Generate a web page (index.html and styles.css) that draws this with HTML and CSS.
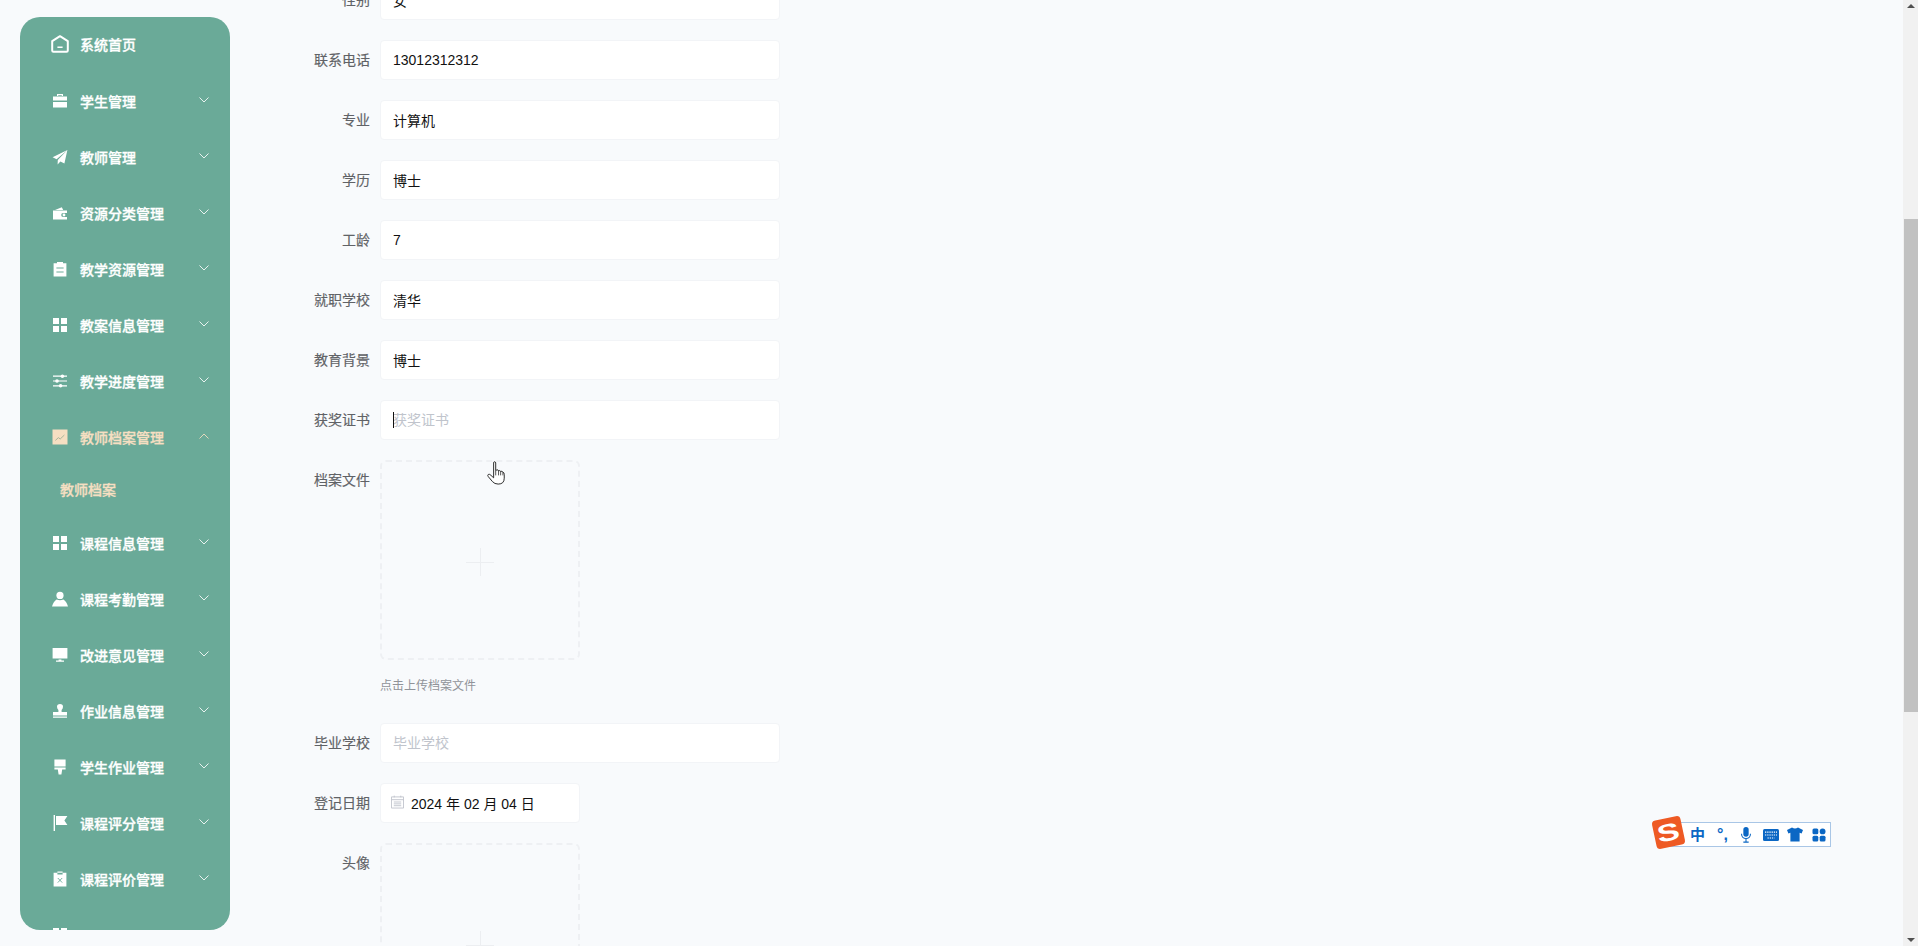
FILE: index.html
```html
<!DOCTYPE html>
<html lang="zh-CN">
<head>
  <meta charset="UTF-8" />
  <meta name="viewport" content="width=device-width, initial-scale=1.0" />
  <title>教师档案</title>
  <link rel="stylesheet" href="styles.css">
</head>
<body>
  <!-- icon sprite -->
  <svg class="sprite" xmlns="http://www.w3.org/2000/svg">
    <symbol id="i-home" viewBox="0 0 18 18">
      <path d="M9 1.2 16.8 6.2V15.6Q16.800 16.800 15.6 16.800H2.4Q1.2 16.800 1.2 15.6V6.2Z" fill="none" stroke="currentColor" stroke-width="2" stroke-linejoin="round"/>
      <path d="M6.4 12.2H11.6" stroke="currentColor" stroke-width="1.6"/>
    </symbol>
    <symbol id="i-case" viewBox="0 0 16 16">
      <path d="M5 3V1H11V3H9.8V2.2H6.2V3Z" fill="currentColor"/>
      <path d="M1 3.4H15V7.6H1ZM1 9H15V14.6H1Z" fill="currentColor"/>
    </symbol>
    <symbol id="i-plane" viewBox="0 0 16 16">
      <path d="M15.4 1 .6 8.2 4.6 10.2ZM15.4 1 5.8 11 5.6 15.4 8.4 12.6 12.4 14.6Z" fill="currentColor"/>
    </symbol>
    <symbol id="i-wallet" viewBox="0 0 16 16">
      <path d="M3 5 9.8 2.2 11.2 5Z" fill="currentColor"/>
      <path d="M1 5.6H15V8H11.2Q9.2 8 9.2 10T11.2 12H15V14.6H1Z" fill="currentColor"/>
      <circle cx="12" cy="10" r="1.4" fill="currentColor"/>
    </symbol>
    <symbol id="i-order" viewBox="0 0 16 16">
      <path d="M5 1H11V2.2H14.4V15.4H1.6V2.2H5ZM4.4 6.4V7.6H11.6V6.4ZM4.4 10.4V11.6H11.6V10.4Z" fill="currentColor" fill-rule="evenodd"/>
    </symbol>
    <symbol id="i-grid" viewBox="0 0 16 16">
      <path d="M1 1H7V7H1ZM9 1H15V7H9ZM1 9H7V15H1ZM9 9H15V15H9Z" fill="currentColor"/>
    </symbol>
    <symbol id="i-sliders" viewBox="0 0 16 16">
      <path d="M1 2.6H15V3.8H1ZM1 7.4H15V8.6H1ZM1 12.2H15V13.4H1Z" fill="currentColor"/>
      <circle cx="10.4" cy="3.2" r="1.8" fill="currentColor"/>
      <circle cx="5" cy="8" r="1.8" fill="currentColor"/>
      <circle cx="8.6" cy="12.8" r="1.8" fill="currentColor"/>
    </symbol>
    <symbol id="i-chart" viewBox="0 0 16 16">
      <path d="M.5 .5H15.5V15.5H.5Z" fill="currentColor"/>
      <path d="M3.4 11.4 6.4 8.6 8.2 10 12.4 6" fill="none" stroke="#a9b69b" stroke-width="1"/>
    </symbol>
    <symbol id="i-user" viewBox="0 0 16 16">
      <circle cx="8" cy="4.4" r="3.6" fill="currentColor"/>
      <path d="M4.6 8.4Q8 10 11.4 8.4 14.6 10.4 16 15.6H0Q1.4 10.4 4.6 8.4Z" fill="currentColor"/>
    </symbol>
    <symbol id="i-monitor" viewBox="0 0 16 16">
      <path d="M.6 1H15.4V11.6H.6ZM6.6 12.4H9.4V13.6H12V14.8H4V13.6H6.6Z" fill="currentColor"/>
    </symbol>
    <symbol id="i-stamp" viewBox="0 0 16 16">
      <path d="M8 1Q11 1 11 3.8 11 5.6 9.6 7V9H15V12.4H1V9H6.4V7Q5 5.6 5 3.8 5 1 8 1ZM1 13.6H15V14.8H1Z" fill="currentColor"/>
    </symbol>
    <symbol id="i-brush" viewBox="0 0 16 16">
      <path d="M2.4 .6H13.6V7.4H2.4ZM2.4 8.6H13.6V10.4H10.2L9.4 15.4H6.6L5.8 10.4H2.4Z" fill="currentColor"/>
    </symbol>
    <symbol id="i-flag" viewBox="0 0 16 16">
      <path d="M1.6 0H3V16H1.6ZM4 1H15.4L12.4 5.4 15.4 10H4Z" fill="currentColor"/>
    </symbol>
    <symbol id="i-release" viewBox="0 0 16 16">
      <path d="M5.4 .6H10.6V1.8H14.4V15.4H1.6V1.8H5.4V3.6H10.6V1.8H5.4Z" fill="currentColor" fill-rule="evenodd"/>
      <path d="M5.8 7 10.2 11.6M10.2 7 5.8 11.6" stroke="#6aaa98" stroke-width=".9"/>
    </symbol>
  </svg>

  <nav class="sidebar">
    <a class="menu-item home-item"><svg class="menu-icon home-icon"><use href="#i-home"/></svg><span>系统首页</span></a>
    <a class="menu-item"><svg class="menu-icon"><use href="#i-case"/></svg><span>学生管理</span><svg class="chevron" viewBox="0 0 10 6"><path d="M.5 .5 5 5 9.5 .5"/></svg></a>
    <a class="menu-item"><svg class="menu-icon"><use href="#i-plane"/></svg><span>教师管理</span><svg class="chevron" viewBox="0 0 10 6"><path d="M.5 .5 5 5 9.5 .5"/></svg></a>
    <a class="menu-item"><svg class="menu-icon"><use href="#i-wallet"/></svg><span>资源分类管理</span><svg class="chevron" viewBox="0 0 10 6"><path d="M.5 .5 5 5 9.5 .5"/></svg></a>
    <a class="menu-item"><svg class="menu-icon"><use href="#i-order"/></svg><span>教学资源管理</span><svg class="chevron" viewBox="0 0 10 6"><path d="M.5 .5 5 5 9.5 .5"/></svg></a>
    <a class="menu-item"><svg class="menu-icon"><use href="#i-grid"/></svg><span>教案信息管理</span><svg class="chevron" viewBox="0 0 10 6"><path d="M.5 .5 5 5 9.5 .5"/></svg></a>
    <a class="menu-item"><svg class="menu-icon"><use href="#i-sliders"/></svg><span>教学进度管理</span><svg class="chevron" viewBox="0 0 10 6"><path d="M.5 .5 5 5 9.5 .5"/></svg></a>
    <a class="menu-item active"><svg class="menu-icon"><use href="#i-chart"/></svg><span>教师档案管理</span><svg class="chevron" viewBox="0 0 10 6"><path d="M.5 5.5 5 1 9.5 5.5"/></svg></a>
    <a class="sub-item">教师档案</a>
    <a class="menu-item"><svg class="menu-icon"><use href="#i-grid"/></svg><span>课程信息管理</span><svg class="chevron" viewBox="0 0 10 6"><path d="M.5 .5 5 5 9.5 .5"/></svg></a>
    <a class="menu-item"><svg class="menu-icon"><use href="#i-user"/></svg><span>课程考勤管理</span><svg class="chevron" viewBox="0 0 10 6"><path d="M.5 .5 5 5 9.5 .5"/></svg></a>
    <a class="menu-item"><svg class="menu-icon"><use href="#i-monitor"/></svg><span>改进意见管理</span><svg class="chevron" viewBox="0 0 10 6"><path d="M.5 .5 5 5 9.5 .5"/></svg></a>
    <a class="menu-item"><svg class="menu-icon"><use href="#i-stamp"/></svg><span>作业信息管理</span><svg class="chevron" viewBox="0 0 10 6"><path d="M.5 .5 5 5 9.5 .5"/></svg></a>
    <a class="menu-item"><svg class="menu-icon"><use href="#i-brush"/></svg><span>学生作业管理</span><svg class="chevron" viewBox="0 0 10 6"><path d="M.5 .5 5 5 9.5 .5"/></svg></a>
    <a class="menu-item"><svg class="menu-icon"><use href="#i-flag"/></svg><span>课程评分管理</span><svg class="chevron" viewBox="0 0 10 6"><path d="M.5 .5 5 5 9.5 .5"/></svg></a>
    <a class="menu-item"><svg class="menu-icon"><use href="#i-release"/></svg><span>课程评价管理</span><svg class="chevron" viewBox="0 0 10 6"><path d="M.5 .5 5 5 9.5 .5"/></svg></a>
    <a class="menu-item"><svg class="menu-icon"><use href="#i-grid"/></svg></a>
  </nav>

  <main class="content">
    <form class="edit-form">
      <div class="form-row">
        <label>性别</label>
        <input type="text" value="女" />
      </div>
      <div class="form-row">
        <label>联系电话</label>
        <input type="text" value="13012312312" />
      </div>
      <div class="form-row">
        <label>专业</label>
        <input type="text" value="计算机" />
      </div>
      <div class="form-row">
        <label>学历</label>
        <input type="text" value="博士" />
      </div>
      <div class="form-row">
        <label>工龄</label>
        <input type="text" value="7" />
      </div>
      <div class="form-row">
        <label>就职学校</label>
        <input type="text" value="清华" />
      </div>
      <div class="form-row">
        <label>教育背景</label>
        <input type="text" value="博士" />
      </div>
      <div class="form-row">
        <label>获奖证书</label>
        <div class="input-wrap">
          <input type="text" placeholder="获奖证书" />
          <i class="caret"></i>
        </div>
      </div>
      <div class="form-row upload-row">
        <label>档案文件</label>
        <div>
          <div class="upload-box"><span class="plus"></span></div>
          <div class="upload-tip">点击上传档案文件</div>
        </div>
      </div>
      <div class="form-row">
        <label>毕业学校</label>
        <input type="text" placeholder="毕业学校" />
      </div>
      <div class="form-row">
        <label>登记日期</label>
        <div class="date-input">
          <svg class="date-icon" viewBox="0 0 14 14"><path d="M.5 1.500H13.500V13.500H.5ZM.5 4.500H13.500M3 7H11M3 9H11M3 11H11M3.500 .2V2M10.500 .2V2" fill="none" stroke="#c0c4cc"/></svg>
          <span>2024 年 02 月 04 日</span>
        </div>
      </div>
      <div class="form-row upload-row">
        <label>头像</label>
        <div class="upload-box"><span class="plus"></span></div>
      </div>
    </form>
  </main>

  <div class="scrollbar">
    <span class="arrow arrow-up"></span>
    <div class="thumb"></div>
    <span class="arrow arrow-down"></span>
  </div>

  <!-- mouse pointer -->
  <svg class="hand" viewBox="0 0 19 25">
    <path d="M7 1.800Q7 .6 8 .6T9.200 1.800V10L10.400 9.200Q11.800 8.800 12.200 10.200 13.600 9.400 14.400 10.800 16 10.200 16.800 11.600 18.200 12 18.200 14V18Q18.200 24.200 11.800 24.200 8 24.200 5.800 21.600L1.400 16.400Q.2 14.800 1.400 14 2.800 13.400 4.200 15L7 17.600Z" fill="#fff" stroke="#222" stroke-width="1" stroke-linejoin="round"/>
    <path d="M12.200 10.200V15M14.400 10.800V15M16.800 11.600V15M9.200 10V15" fill="none" stroke="#222" stroke-width=".8"/>
  </svg>

  <!-- sogou input bar -->
  <div class="ime-bar">
    <span class="ime-logo"><b>S</b></span>
    <span class="ime-zh">中</span>
    <span class="ime-punc">°,</span>
    <svg class="ime-mic" viewBox="0 0 12 18"><path d="M3 3a3 3 0 0 1 6 0V8a3 3 0 0 1-6 0Z" fill="currentColor"/><path d="M1 7.500V8a5 5 0 0 0 10 0V7.500M6 13V17M3 17H9" fill="none" stroke="currentColor" stroke-width="1.200"/></svg>
    <svg class="ime-keys" viewBox="0 0 16 12"><rect width="16" height="12" rx="1.500" fill="currentColor"/><path d="M2 3.200H14M2 6H14M4.500 9H11.500" stroke="#fff" stroke-width="1.200" stroke-dasharray="1.300 .9"/></svg>
    <svg class="ime-shirt" viewBox="0 0 16 15"><path d="M5 .5Q8 2.500 11 .5L16 3 14.600 6.500 12.600 5.800V14.500H3.400V5.800L1.400 6.500 0 3Z" fill="currentColor"/></svg>
    <svg class="ime-apps" viewBox="0 0 14 14"><rect x=".5" y=".5" width="5.800" height="5.800" rx="1.500" fill="currentColor"/><circle cx="10.600" cy="3.400" r="2.900" fill="currentColor"/><rect x=".5" y="7.700" width="5.800" height="5.800" rx="1.500" fill="currentColor"/><rect x="7.700" y="7.700" width="5.800" height="5.800" rx="1.500" fill="currentColor"/></svg>
  </div>
</body>
</html>
```

FILE: styles.css
```css
* {
  box-sizing: border-box;
}

html, body {
  height: 100%;
}

body {
  margin: 0;
  display: flex;
  overflow: hidden;
  background-color: #f8fafc;
  color: #606266;
  font-family: "Liberation Sans", "Noto Sans CJK SC", sans-serif;
  font-size: 14px;
}

.sprite {
  display: none;
}

/* sidebar */
.sidebar {
  flex: none;
  width: 210px;
  height: 913px;
  margin: 17px 0 0 20px;
  border-radius: 20px;
  background-color: #6aaa98;
  overflow: hidden;
  color: #fff;
}

.menu-item {
  display: flex;
  align-items: center;
  height: 56px;
  padding: 0 21px 0 32px;
  font-weight: 500;
  -webkit-text-stroke: 0.3px currentColor;
}

.home-item {
  height: 54px;
  margin-bottom: 2px;
}

.menu-icon {
  flex: none;
  width: 16px;
  height: 16px;
  margin-right: 12px;
  color: inherit;
}

.home-icon {
  width: 18px;
  height: 18px;
  margin: 0 11px 0 -1px;
}

.chevron {
  width: 10px;
  height: 6px;
  margin: -3px 0 0 auto;
  fill: none;
  stroke: currentColor;
  stroke-width: 1;
  opacity: 0.85;
}

.menu-item.active,
.sub-item {
  color: #f6dfc2;
}

.sub-item {
  display: flex;
  align-items: center;
  height: 48px;
  margin-bottom: 2px;
  padding-left: 40px;
  font-weight: 500;
  -webkit-text-stroke: 0.3px currentColor;
}

/* form */
.content {
  flex: 1;
  min-width: 0;
}

.edit-form {
  margin-top: -20px;
}

.form-row {
  display: flex;
  margin-bottom: 20px;
}

.form-row label {
  flex: none;
  width: 140px;
  margin-right: 10px;
  line-height: 40px;
  text-align: right;
  color: #606266;
  -webkit-text-stroke: 0.15px currentColor;
}

.form-row input,
.date-input {
  height: 40px;
  border: 1px solid #f2f4f7;
  border-radius: 4px;
  background-color: #fff;
  font-family: inherit;
  font-size: 14px;
  color: #111;
}

.form-row input {
  width: 400px;
  padding: 0 12px;
  outline: none;
}

.form-row input::placeholder {
  color: #c0c4cc;
  opacity: 1;
}

.input-wrap {
  position: relative;
}

.caret {
  position: absolute;
  left: 13px;
  top: 12px;
  width: 1px;
  height: 16px;
  background-color: #111;
}

.upload-box {
  display: flex;
  justify-content: center;
  width: 200px;
  height: 200px;
  padding-top: 86px;
  border: 2px dashed #eef0f3;
  border-radius: 6px;
}

.plus {
  position: relative;
  display: block;
  width: 28px;
  height: 28px;
  background:
    linear-gradient(#eceef1, #eceef1) center / 28px 1px no-repeat,
    linear-gradient(#eceef1, #eceef1) center / 1px 28px no-repeat;
}

.upload-tip {
  height: 43px;
  padding-top: 9px;
  line-height: 34px;
  font-size: 12px;
  color: #909399;
}

.date-input {
  display: flex;
  align-items: center;
  width: 200px;
  padding-left: 10px;
}

.date-icon {
  width: 13px;
  height: 14px;
  margin: -3px 7px 0 0;
}

/* scrollbar */
.scrollbar {
  flex: none;
  display: flex;
  flex-direction: column;
  width: 15px;
  height: 100%;
  padding-left: 1px;
  background-color: #f1f1f1;
}

.thumb {
  height: 493px;
  margin: 211px 0 auto;
  background-color: #c1c1c1;
}

.arrow {
  display: block;
  width: 0;
  height: 0;
  margin: 4px auto 0;
  border-left: 4px solid transparent;
  border-right: 4px solid transparent;
}

.arrow-up {
  border-bottom: 4px solid #505050;
}

.arrow-down {
  margin: 0 auto 4px;
  border-top: 4px solid #505050;
}

/* things on top of the page */
.hand {
  position: absolute;
  left: 487px;
  top: 461px;
  width: 18px;
  height: 24px;
}

.ime-bar {
  position: absolute;
  left: 1665px;
  top: 822px;
  display: flex;
  align-items: center;
  width: 166px;
  height: 25px;
  padding-left: 24px;
  border: 1px solid #a9c6e6;
  background-color: #fff;
  color: #0b67c4;
}

.ime-logo {
  position: absolute;
  left: -12px;
  top: -5px;
  display: flex;
  align-items: center;
  justify-content: center;
  width: 29px;
  height: 29px;
  border-radius: 4px;
  background-color: #ee5a24;
  transform: rotate(-12deg);
}

.ime-logo b {
  font-size: 28px;
  line-height: 27px;
  color: #fff;
  transform: scale(1.2, 0.85);
}

.ime-zh {
  width: 15px;
  font-size: 15px;
  font-weight: 700;
  line-height: 20px;
}

.ime-punc {
  width: 12px;
  margin-left: 12px;
  font-size: 16px;
  font-weight: 700;
  line-height: 16px;
}

.ime-mic {
  width: 12px;
  height: 16px;
  margin-left: 11px;
}

.ime-keys {
  width: 16px;
  height: 12px;
  margin-left: 11px;
}

.ime-shirt {
  width: 16px;
  height: 15px;
  margin-left: 8px;
}

.ime-apps {
  width: 14px;
  height: 14px;
  margin-left: 9px;
}
```
